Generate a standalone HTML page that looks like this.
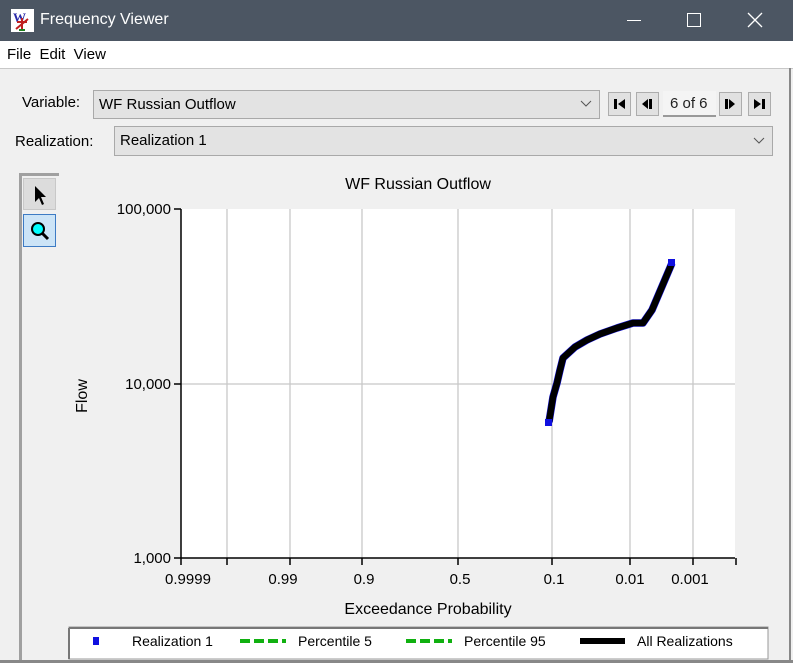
<!DOCTYPE html>
<html><head><meta charset="utf-8"><style>
body{margin:0;width:793px;height:663px;overflow:hidden;background:#f0f0f0;font-family:"Liberation Sans",Arial,sans-serif;font-size:14px;color:#000;position:relative}
.a{position:absolute}
.combo{position:absolute;background:#e3e3e3;border:1px solid #a9a9a9;box-sizing:border-box;font-size:15px;padding:5px 0 0 5px}
.btn{position:absolute;top:92px;width:23px;height:24px;background:#e1e1e1;border:1px solid #adadad;box-sizing:border-box}
</style></head><body>
<div class="a" style="left:0;top:0;width:793px;height:41px;background:#4c5663"></div>
<svg class="a" style="left:11px;top:9px" width="23" height="23"><rect width="23" height="23" fill="#fff"/><text x="2" y="13" font-size="13" font-weight="bold" fill="#2a2aa8" font-family="Liberation Serif">W</text><path d="M11 9 L11 21 M6 13 L16 13 M5 20 L17 10" stroke="#c02020" stroke-width="2"/><path d="M8 21 L14 21" stroke="#208020" stroke-width="2"/></svg>
<div class="a" style="left:40px;top:11px;color:#fff;font-size:16px">Frequency Viewer</div>
<div class="a" style="left:627px;top:20px;width:14px;height:1px;background:#fff"></div>
<div class="a" style="left:687px;top:13px;width:12px;height:12px;border:1px solid #fff"></div>
<svg class="a" style="left:747px;top:12px" width="16" height="16"><path d="M1 1L15 15M15 1L1 15" stroke="#fff" stroke-width="1.3"/></svg>
<div class="a" style="left:0;top:41px;width:793px;height:27px;background:#fff;border-bottom:1px solid #c8c8c8"></div>
<div class="a" style="left:7px;top:46px;font-size:15px">File&nbsp;&nbsp;Edit&nbsp;&nbsp;View</div>
<div class="a" style="left:789px;top:68px;width:2px;height:595px;background:#888"></div>
<div class="a" style="left:0;top:660px;width:793px;height:3px;background:#888"></div>
<div class="a" style="left:22px;top:94px;font-size:15px">Variable:</div>
<div class="combo" style="left:93px;top:90px;width:507px;height:29px">WF Russian Outflow</div>
<svg class="a" style="left:580px;top:100px" width="12" height="8"><path d="M1 1L6 6L11 1" stroke="#555" fill="none"/></svg>
<div class="btn" style="left:608px"><svg width="21" height="22"><path d="M5 6h3v10h-3zM16 6v10l-7-5z" fill="#000"/></svg></div>
<div class="btn" style="left:636px"><svg width="21" height="22"><path d="M12 6h3v10h-3zM11 6v10l-6-5z" fill="#000"/></svg></div>
<div class="a" style="left:663px;top:91px;width:53px;height:26px;background:#f4f4f4;border-bottom:2px solid #999;box-sizing:border-box;font-size:15px;padding:4px 0 0 7px;color:#222">6 of 6</div>
<div class="btn" style="left:719px"><svg width="21" height="22"><path d="M5 6h3v10h-3zM9 6v10l6-5z" fill="#000"/></svg></div>
<div class="btn" style="left:748px"><svg width="21" height="22"><path d="M13 6h3v10h-3zM5 6v10l7-5z" fill="#000"/></svg></div>
<div class="a" style="left:15px;top:133px;font-size:15px">Realization:</div>
<div class="combo" style="left:114px;top:126px;width:659px;height:30px">Realization 1</div>
<svg class="a" style="left:753px;top:137px" width="12" height="8"><path d="M1 1L6 6L11 1" stroke="#555" fill="none"/></svg>
<div class="a" style="left:19px;top:173px;width:40px;height:487px;border-left:3px solid #a0a0a0;border-top:3px solid #a0a0a0;box-sizing:border-box"></div>
<div class="a" style="left:23px;top:178px;width:33px;height:32px;background:#dcdcdc;border:1px solid #c8c8c8;box-sizing:border-box"><svg width="31" height="30"><path d="M11 7L11 23L15 19L18 26L20 25L17 18L22 18Z" fill="#000"/></svg></div>
<div class="a" style="left:23px;top:214px;width:33px;height:33px;background:#cce4f7;border:1px solid #3d7bc4;box-sizing:border-box"><svg width="31" height="31"><circle cx="14" cy="14" r="6" fill="#00ffff" stroke="#000" stroke-width="2"/><path d="M18 18L24 24" stroke="#000" stroke-width="3"/></svg></div>
<svg class="a" style="left:0;top:0" width="793" height="663" font-family="Liberation Sans,Arial,sans-serif" font-size="14">
<text x="418" y="189" text-anchor="middle" font-size="16">WF Russian Outflow</text>
<rect x="181" y="209" width="554" height="349" fill="#fff"/>
<g stroke="#c8c8c8" stroke-width="1.3">
<path d="M227 209V558M290 209V558M362 209V558M458 209V558M552 209V558M630 209V558M693 209V558M181 384H735"/>
</g>
<path d="M181 209V565M174 209H181M174 384H181M174 558H735M227 558v7M290 558v7M362 558v7M458 558v7M552 558v7M630 558v7M693 558v7M736 558v7" stroke="#000" stroke-width="1.5" fill="none"/>
<g text-anchor="end" font-size="15"><text x="171" y="214">100,000</text><text x="171" y="389">10,000</text><text x="171" y="563">1,000</text></g>
<g text-anchor="middle" font-size="15"><text x="188" y="584">0.9999</text><text x="283" y="584">0.99</text><text x="364" y="584">0.9</text><text x="460" y="584">0.5</text><text x="554" y="584">0.1</text><text x="630" y="584">0.01</text><text x="690" y="584">0.001</text></g>
<text x="428" y="614" text-anchor="middle" font-size="16">Exceedance Probability</text>
<text transform="translate(87,396) rotate(-90)" text-anchor="middle" font-size="16">Flow</text>
<path d="M549 422L553 397L557 383L560 370L563 358L575 347L587 340L600 334L617 328L633 323L643 323L652 310L672 263" stroke="#1010e0" stroke-width="7.5" fill="none" stroke-linejoin="round"/>
<path d="M549 422L553 397L557 383L560 370L563 358L575 347L587 340L600 334L617 328L633 323L643 323L652 310L672 263" stroke="#000" stroke-width="6.5" fill="none" stroke-linejoin="round"/>
<rect x="668" y="259" width="7" height="7" fill="#1010e0"/><rect x="545" y="419" width="7" height="7" fill="#1010e0"/>
<rect x="69" y="627" width="699" height="32" fill="#fff" stroke="#999"/>
<path d="M69 628H768M69 628V659" stroke="#777" stroke-width="2"/>
<rect x="93" y="637" width="6" height="8" fill="#1010e0"/>
<text x="132" y="646" font-size="14">Realization 1</text>
<path d="M240 641H286" stroke="#10b010" stroke-width="4" stroke-dasharray="10,4"/>
<text x="298" y="646" font-size="14">Percentile 5</text>
<path d="M406 641H452" stroke="#10b010" stroke-width="4" stroke-dasharray="10,4"/>
<text x="464" y="646" font-size="14">Percentile 95</text>
<path d="M580 641H625" stroke="#000" stroke-width="6"/>
<text x="637" y="646" font-size="14">All Realizations</text>
</svg>
</body></html>
